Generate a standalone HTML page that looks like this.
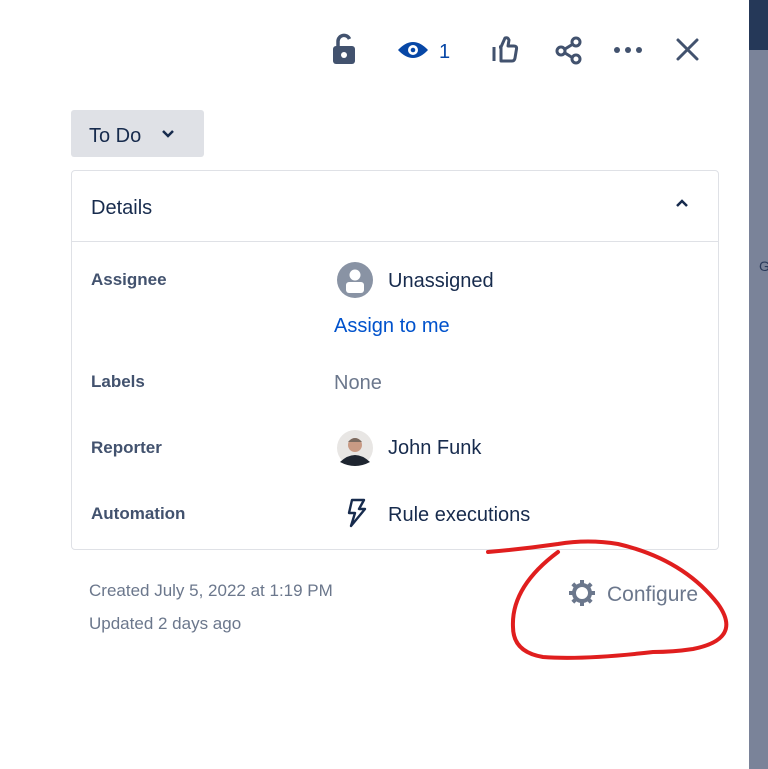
<!DOCTYPE html>
<html><head><style>
body{margin:0;width:768px;height:769px;background:#fff;font-family:"Liberation Sans",sans-serif;position:relative;overflow:hidden;color:#172b4d}
.a{position:absolute}
.strip{left:749px;top:0;width:19px;height:769px;background:#7a8399}
.strip2{left:749px;top:0;width:19px;height:50px;background:#253858}
.lbl{font-size:17px;font-weight:bold;color:#42526e;left:91px}
.val{font-size:20px;color:#172b4d;left:388px}
</style></head><body>
<div class="a strip"></div><div class="a strip2"></div>
<div class="a" style="left:759px;top:258px;color:#2a3a5a;font-size:14px">G</div>

<svg class="a" style="left:330px;top:30px" width="390" height="40" viewBox="330 30 390 40">
 <g fill="#42526e"><rect x="333" y="46" width="22" height="18" rx="3"/></g>
 <path d="M338 46 v-5 a6 6 0 0 1 11.5 -2" stroke="#42526e" stroke-width="3.5" fill="none"/>
 <circle cx="344" cy="55" r="3" fill="#fff"/>
 <path d="M398 50 q15 -16 30 0 q-15 16 -30 0z" fill="#0747a6"/>
 <circle cx="413" cy="50" r="5" fill="#fff"/><circle cx="413" cy="50" r="2.3" fill="#0747a6"/>
 <text x="439" y="58" font-size="20" fill="#0747a6" font-family="Liberation Sans">1</text>
 <path d="M494 47 v14 M499 47 h2 l4 -9 q3 -1 4 2 l-1 6 h6 q3 0 2.5 3 l-1.5 9 q-0.5 3 -3 3 h-11 v-14" stroke="#42526e" stroke-width="3" fill="none" stroke-linejoin="round"/>
 <g stroke="#42526e" stroke-width="3" fill="none"><circle cx="561" cy="51" r="4"/><circle cx="576" cy="42" r="4"/><circle cx="576" cy="59" r="4"/><path d="M565 49 l8 -5 M565 53 l8 5"/></g>
 <g fill="#42526e"><circle cx="617" cy="50" r="3"/><circle cx="628" cy="50" r="3"/><circle cx="639" cy="50" r="3"/></g>
 <path d="M678 40 l19 19 M697 40 l-19 19" stroke="#42526e" stroke-width="3" stroke-linecap="round"/>
</svg>

<div class="a" style="left:71px;top:110px;width:133px;height:47px;background:#dfe1e6;border-radius:3px"></div>
<div class="a" style="left:89px;top:125px;font-size:20px;color:#172b4d">To Do</div>
<svg class="a" style="left:160px;top:128px" width="16" height="12"><path d="M3 3 l5 5 l5 -5" stroke="#172b4d" stroke-width="2.5" fill="none"/></svg>

<div class="a" style="left:71px;top:170px;width:646px;height:378px;border:1px solid #dfe1e6;border-radius:4px"></div>
<div class="a" style="left:72px;top:241px;width:646px;height:1px;background:#dfe1e6"></div>
<div class="a" style="left:91px;top:197px;font-size:20px;color:#172b4d">Details</div>
<svg class="a" style="left:674px;top:198px" width="16" height="12"><path d="M3 8 l5 -5 l5 5" stroke="#172b4d" stroke-width="2.5" fill="none"/></svg>

<div class="a lbl" style="top:270px">Assignee</div>
<div class="a lbl" style="top:372px">Labels</div>
<div class="a lbl" style="top:438px">Reporter</div>
<div class="a lbl" style="top:504px">Automation</div>

<svg class="a" style="left:336px;top:261px" width="38" height="38"><circle cx="19" cy="19" r="18" fill="#8993a4"/><circle cx="19" cy="14" r="5.5" fill="#fff"/><rect x="10" y="21" width="18" height="11" rx="3" fill="#fff"/></svg>
<div class="a val" style="top:270px">Unassigned</div>
<div class="a" style="left:334px;top:315px;font-size:20px;color:#0052cc">Assign to me</div>
<div class="a" style="left:334px;top:372px;font-size:20px;color:#6b778c">None</div>
<svg class="a" style="left:336px;top:429px" width="38" height="38"><circle cx="19" cy="19" r="18" fill="#e8e6e4"/><circle cx="19" cy="16" r="7" fill="#c89a84"/><path d="M12 13 q7 -8 14 0 z" fill="#7a6a60"/><path d="M4 33 q15 -14 30 0 q-15 8 -30 0z" fill="#1e2530"/></svg>
<div class="a val" style="top:437px">John Funk</div>
<svg class="a" style="left:344px;top:498px" width="24" height="30"><path d="M8 2 h12 l-5 9 h6 l-14 17 l4 -13 h-6 z" stroke="#172b4d" stroke-width="2.4" fill="none" stroke-linejoin="round"/></svg>
<div class="a val" style="top:504px">Rule executions</div>

<div class="a" style="left:89px;top:581px;font-size:17px;color:#6b778c">Created July 5, 2022 at 1:19 PM</div>
<div class="a" style="left:89px;top:614px;font-size:17px;color:#6b778c">Updated 2 days ago</div>
<svg class="a" style="left:568px;top:579px" width="28" height="28" viewBox="0 0 28 28"><circle cx="14" cy="14" r="8" stroke="#6b778c" stroke-width="4" fill="none"/><g stroke="#6b778c" stroke-width="4"><path d="M14 1 v5 M14 22 v5 M1 14 h5 M22 14 h5 M4.8 4.8 l3.5 3.5 M19.7 19.7 l3.5 3.5 M4.8 23.2 l3.5 -3.5 M19.7 8.3 l3.5 -3.5"/></g></svg>
<div class="a" style="left:607px;top:583px;font-size:21px;color:#6b778c">Configure</div>

<svg class="a" style="left:0;top:0" width="768" height="769">
<g stroke="#e01e1e" stroke-width="4" fill="none" stroke-linecap="round">
<path d="M488 552 q35 -3 70 -8 q30 -5 60 0 q65 15 100 60 q25 35 -25 45 q-20 3 -40 3 q-70 8 -110 5 q-30 -5 -30 -30 q-2 -40 45 -75"/>
</g></svg>
</body></html>
